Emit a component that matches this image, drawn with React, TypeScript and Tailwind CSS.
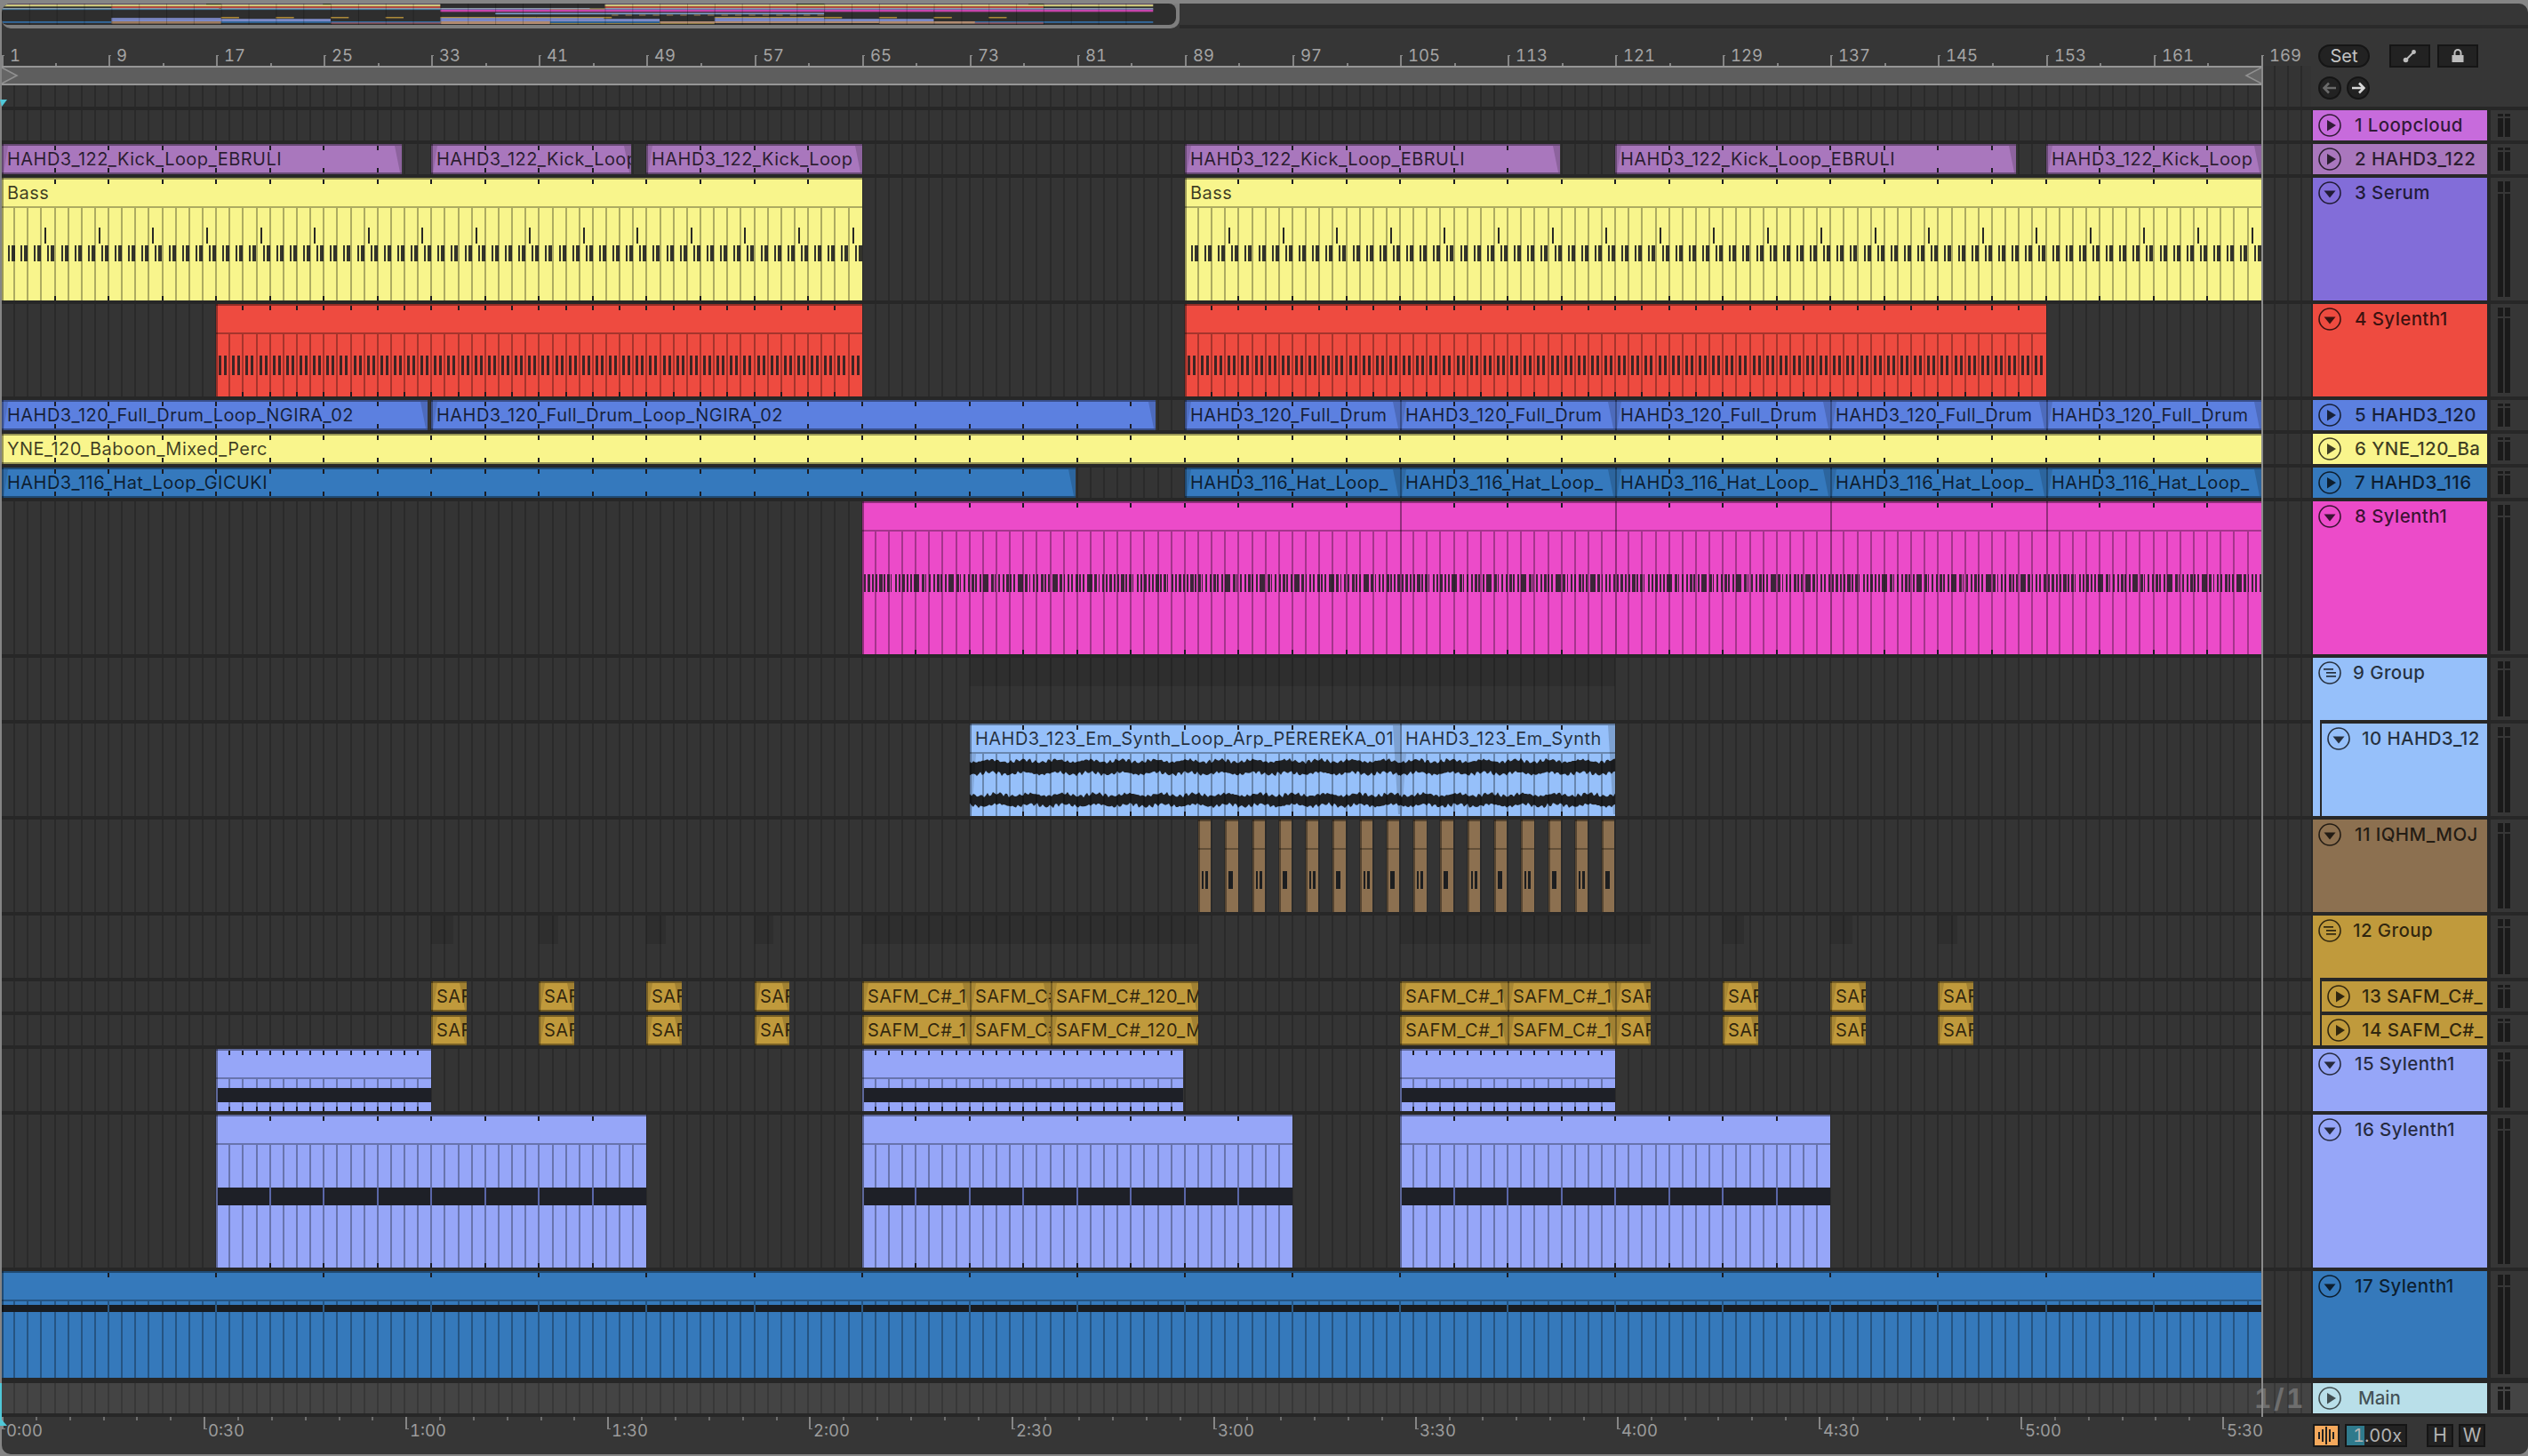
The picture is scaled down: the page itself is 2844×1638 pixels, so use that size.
import React from "react";

const X = (b: number) => (b <= 1 ? 0 : Math.round((b - 1) * 15.135) - 1);
const T = (s: number) => Math.round(s * 7.57);

type C = { a: number; b: number; t?: string };
type Track = {
  name: string;
  nx: number;
  h: number;
  color: string;
  clipColor?: string;
  icon: "play" | "down" | "group";
  group?: string;
  clips?: C[];
  step?: number;
  audio?: boolean;
  notes?: string;
  shade?: [number, number][];
};

const kick = "HAHD3_122_Kick_Loop_EBRULI";
const kick2 = "HAHD3_122_Kick_Loop";
const dr = "HAHD3_120_Full_Drum_Loop_NGIRA_02";
const dr2 = "HAHD3_120_Full_Drum";
const hat = "HAHD3_116_Hat_Loop_GICUKI";
const hat2 = "HAHD3_116_Hat_Loop_";
const syn = "HAHD3_123_Em_Synth_Loop_Arp_PEREREKA_01";

const safClips: C[] = [
  ...[33, 41, 49, 57].map((a) => ({ a, b: a + 2.62, t: "SAF" })),
  { a: 65, b: 73, t: "SAFM_C#_1" },
  { a: 73, b: 79, t: "SAFM_C#" },
  { a: 79, b: 90, t: "SAFM_C#_120_M" },
  { a: 105, b: 113, t: "SAFM_C#_1" },
  { a: 113, b: 121, t: "SAFM_C#_1" },
  { a: 121, b: 123.6, t: "SAF" },
  ...[129, 137, 145].map((a) => ({ a, b: a + 2.62, t: "SAF" })),
];

const BLUE = "#96c0fa";
const GOLD = "#c09a3c";

const tracks: Track[] = [
  { name: "1 Loopcloud", nx: 47, h: 34, color: "#c76bdc", icon: "play" },
  {
    name: "2 HAHD3_122", nx: 47, h: 34, color: "#a977bd", icon: "play", step: 4, audio: true,
    clips: [
      { a: 1, b: 30.83, t: kick }, { a: 33, b: 47.85, t: kick2 }, { a: 49, b: 65, t: kick2 },
      { a: 89, b: 116.9, t: kick }, { a: 121, b: 150.8, t: kick }, { a: 153, b: 169, t: kick2 },
    ],
  },
  {
    name: "3 Serum", nx: 47, h: 138, color: "#826dd9", clipColor: "#f8f58c", icon: "down", step: 4, notes: "bass",
    clips: [{ a: 1, b: 65, t: "Bass" }, { a: 89, b: 169, t: "Bass" }],
  },
  { name: "4 Sylenth1", nx: 47, h: 104, color: "#ee4b40", icon: "down", step: 2, notes: "red", clips: [{ a: 17, b: 65 }, { a: 89, b: 153 }] },
  {
    name: "5 HAHD3_120", nx: 47, h: 34, color: "#5c80e0", icon: "play", step: 4, audio: true,
    clips: [
      { a: 1, b: 32.7, t: dr }, { a: 33, b: 86.8, t: dr }, { a: 89, b: 105, t: dr2 }, { a: 105, b: 121, t: dr2 },
      { a: 121, b: 137, t: dr2 }, { a: 137, b: 153, t: dr2 }, { a: 153, b: 169, t: dr2 },
    ],
  },
  { name: "6 YNE_120_Ba", nx: 47, h: 34, color: "#f9f58c", icon: "play", step: 4, clips: [{ a: 1, b: 169, t: "YNE_120_Baboon_Mixed_Perc" }] },
  {
    name: "7 HAHD3_116", nx: 47, h: 34, color: "#3579bd", icon: "play", step: 4, audio: true,
    clips: [
      { a: 1, b: 80.9, t: hat }, { a: 89, b: 105, t: hat2 }, { a: 105, b: 121, t: hat2 },
      { a: 121, b: 137, t: hat2 }, { a: 137, b: 153, t: hat2 }, { a: 153, b: 169, t: hat2 },
    ],
  },
  {
    name: "8 Sylenth1", nx: 47, h: 172, color: "#ec4bc9", icon: "down", step: 4, notes: "pink",
    clips: [{ a: 65, b: 105 }, { a: 105, b: 121 }, { a: 121, b: 137 }, { a: 137, b: 153 }, { a: 153, b: 169 }],
  },
  { name: "9 Group", nx: 45, h: 70, color: BLUE, icon: "group", shade: [[73, 121]] },
  {
    name: "10 HAHD3_12", nx: 55, h: 104, color: BLUE, icon: "down", group: BLUE, step: 4, audio: true, notes: "wave",
    clips: [{ a: 73, b: 105, t: syn }, { a: 105, b: 121, t: "HAHD3_123_Em_Synth" }],
  },
  {
    name: "11 IQHM_MOJ", nx: 47, h: 104, color: "#8c7050", icon: "down", notes: "tiny",
    clips: Array.from({ length: 16 }, (_, i) => ({ a: 90 + i * 2, b: 90.95 + i * 2 })),
  },
  {
    name: "12 Group", nx: 45, h: 70, color: GOLD, icon: "group",
    shade: [[33, 34.6], [41, 42.4], [49, 50.4], [57, 58.4], [65, 90], [105, 123.6], [129, 130.6], [137, 138.6], [145, 146.4]],
  },
  { name: "13 SAFM_C#_", nx: 55, h: 34, color: GOLD, icon: "play", group: GOLD, audio: true, clips: safClips },
  { name: "14 SAFM_C#_", nx: 55, h: 34, color: GOLD, icon: "play", group: GOLD, audio: true, clips: safClips },
  { name: "15 Sylenth1", nx: 47, h: 70, color: "#96a6f8", icon: "down", step: 1, notes: "band15", clips: [{ a: 17, b: 33 }, { a: 65, b: 88.85 }, { a: 105, b: 121 }] },
  { name: "16 Sylenth1", nx: 47, h: 172, color: "#96a6f8", icon: "down", step: 4, notes: "band16", clips: [{ a: 17, b: 49 }, { a: 65, b: 97 }, { a: 105, b: 137 }] },
  { name: "17 Sylenth1", nx: 47, h: 120, color: "#3579bb", icon: "down", step: 8, notes: "band17", clips: [{ a: 1, b: 169 }] },
];

function Rc({ x, y, w, h, f, o }: { x: number; y: number; w: number; h: number; f: string; o?: number }) {
  return <rect x={x} y={y} width={w} height={h} fill={f} fillOpacity={o ?? 1} shapeRendering="crispEdges" />;
}

function noise(i: number, s: number) {
  return Math.sin(i * 0.9 + s) * 0.5 + Math.sin(i * 2.3 + s * 2) * 0.3 + Math.sin(i * 0.17 + s) * 0.6 + Math.sin(i * 5.1) * 0.3;
}

function wavePath(w: number, cy: number, half: number, s: number) {
  const top: string[] = [];
  const bot: string[] = [];
  for (let i = 0; i <= w; i += 2) {
    top.push(`${i},${(cy - half - noise(i, s) * 2.4).toFixed(1)}`);
    bot.unshift(`${i},${(cy + half + noise(i, s + 3) * 2.4).toFixed(1)}`);
  }
  return top.concat(bot).join(" ");
}

function Clip({ t, c, index }: { t: Track; c: C; index: number }) {
  const left = X(c.a);
  const w = X(c.b) - left;
  const h = t.h;
  const tall = h > 40;
  const rx = (b: number) => X(b) - left;
  const shapes: React.ReactNode[] = [];
  const push = (x: number, y: number, wd: number, ht: number, f: string, o?: number) =>
    shapes.push(<Rc key={shapes.length} x={x} y={y} w={wd} h={ht} f={f} o={o} />);
  const first = Math.ceil(c.a);
  if (tall && t.notes !== "tiny") {
    for (let b = first; b < c.b; b++) if (b > c.a) push(rx(b) - 1, 34, 2, h - 34, "#000", 0.3);
  }
  if (tall) push(0, 32, w, 2, "#000", 0.3);
  const ink = "#1d1e20";
  if (t.notes === "bass") {
    for (let b = first; b < c.b; b++) {
      push(rx(b) + 7, 76, 2, 18, ink, 0.9);
      push(rx(b) + 11, 76, 4, 18, ink, 0.9);
      if ((b - 4) % 4 === 0) push(rx(b) + 4, 56, 2, 18, ink, 0.95);
    }
  }
  if (t.notes === "red") {
    for (let b = first; b < c.b; b++) {
      push(rx(b) + 3, 58, 3, 22, ink, 0.85);
      push(rx(b) + 9, 58, 3, 22, ink, 0.85);
    }
  }
  if (t.notes === "pink") {
    const ws = [2, 3, 2, 2, 4, 2, 3, 1, 2];
    let k = 0;
    for (let x = 2; x < w; x += 4.32) {
      push(Math.round(x), 82, ws[k++ % ws.length], 20, ink, 0.85);
    }
  }
  if (t.notes === "tiny") {
    if (index % 2 === 0) {
      push(4, 58, 2, 20, ink);
      push(8, 58, 3, 20, ink);
    } else {
      push(4, 58, 5, 20, ink);
    }
  }
  if (t.notes === "band15") push(2, 44, w - 2, 16, "#1e2027");
  if (t.notes === "band16") {
    push(2, 82, w - 2, 20, "#1e2027");
    for (let b = first; b < c.b; b++) if ((b - 1) % 4 === 0 && b > c.a) push(rx(b) - 1, 82, 2, 20, "#5a66a8");
  }
  if (t.notes === "band17") {
    push(0, 38, w, 8, "#181c21");
    for (let b = first; b < c.b; b++) if ((b - 1) % 8 === 0 && b > c.a) push(rx(b) - 1, 38, 2, 8, "#2a5a88");
  }
  const step = t.step;
  if (step) {
    for (let b = first; b < c.b; b++) {
      if ((b - 1) % step === 0 && b > c.a) {
        push(rx(b) - 1, 2, 2, 5, "#1c1c22");
        if (t.notes !== "band17") push(rx(b) - 1, h - (tall ? 5 : 7), 2, 5, "#1c1c22");
      }
    }
  }
  push(0, 0, w, 2, "#000", 0.38);
  push(0, 0, 2, h, "#000", 0.38);
  if (!tall) push(0, h - 2, w, 2, "#000", 0.38);
  return (
    <div className="absolute top-0 bottom-0 overflow-hidden" style={{ left, width: w, background: t.clipColor ?? t.color }}>
      <svg className="absolute left-0 top-0" width={w} height={h}>
        {t.notes === "wave" && (
          <>
            <polygon points={wavePath(w, 49, 7, c.a)} fill="#1e2023" />
            <polygon points={wavePath(w, 86, 6, c.a + 5)} fill="#1e2023" />
          </>
        )}
        {shapes}
        {t.audio && (
          <>
            <polygon points={`${w - 8},2 ${w},2 ${w},${h - 2} ${w - 2},${h - 2}`} fill="#000" fillOpacity={0.16} />
            <polygon points={`2,${tall ? 34 : 2} 7,${tall ? 34 : 2} 2,${h}`} fill="#000" fillOpacity={0.12} />
          </>
        )}
      </svg>
      {c.t && (
        <span
          className="absolute left-[6px] top-[2px] h-[30px] leading-[30px] whitespace-nowrap overflow-hidden text-[20px] tracking-[0.45px] text-black/75"
          style={{ width: w - 6 }}
        >
          {c.t}
        </span>
      )}
    </div>
  );
}

function Icon({ kind, className }: { kind: "play" | "down" | "group"; className?: string }) {
  return (
    <svg width="26" height="26" viewBox="0 0 26 26" className={className}>
      <circle cx="13" cy="13" r="12" fill="none" stroke="currentColor" strokeWidth="1.6" />
      {kind === "play" && <polygon points="10,7 20,13 10,19.5" fill="currentColor" />}
      {kind === "down" && <polygon points="6.5,10.5 19.5,10.5 13,18.5" fill="currentColor" />}
      {kind === "group" && (
        <>
          <rect x="6" y="8" width="11" height="1.7" fill="currentColor" />
          <rect x="9" y="12" width="11" height="1.7" fill="currentColor" />
          <rect x="9" y="16" width="11" height="1.7" fill="currentColor" />
        </>
      )}
    </svg>
  );
}

function Meter({ h, main }: { h: number; main?: boolean }) {
  const cap = h < 40 ? 3 : h < 80 ? 8 : h < 110 ? 10 : 12;
  return (
    <div className={`flex-1 flex gap-[2px] pl-[8px] py-[4px] ${main ? "bg-[#444444]" : "bg-[#363636]"}`}>
      {[0, 1].map((i) => (
        <div key={i} className="w-[6px] flex flex-col gap-[2px]">
          <div className="bg-[#1a1a1a]" style={{ height: cap }} />
          <div className="flex-1 bg-[#1a1a1a]" />
        </div>
      ))}
    </div>
  );
}

function Sep({ h = 4, strip }: { h?: number; strip?: string }) {
  return (
    <div className="flex bg-[#272727] relative" style={{ height: h }}>
      <div className="w-[2600px]" />
      {strip && <div className="w-[8px]" style={{ background: strip }} />}
    </div>
  );
}

function Row({ t }: { t: Track }) {
  return (
    <div className="flex relative" style={{ height: t.h }}>
      <div className="w-[2598px] relative">
        {t.shade?.map(([a, b], i) => (
          <div key={i} className="absolute top-0 h-[32px] bg-black/10" style={{ left: X(a), width: X(b) - X(a) }} />
        ))}
        {t.clips?.map((c, i) => <Clip key={i} t={t} c={c} index={i} />)}
      </div>
      <div className="w-[2px] bg-[#272727]" />
      <div className="w-[196px] flex overflow-hidden" style={{ background: t.color }}>
        {t.group && <div className="w-[8px] shrink-0" />}
        {t.group && <div className="w-[2px] shrink-0 bg-[#272727]" />}
        <div className="relative flex-1 text-black/75">
          <Icon kind={t.icon} className="absolute top-[4px] left-[6px]" />
          <div
            className="absolute top-0 h-[34px] leading-[34px] whitespace-nowrap text-[20.5px] tracking-[0.4px] font-medium"
            style={{ left: t.group ? t.nx - 10 : t.nx }}
          >
            {t.name}
          </div>
        </div>
      </div>
      <div className="w-[4px] bg-[#272727]" />
      <Meter h={t.h} />
    </div>
  );
}

function Grid({ line, bg }: { line: string; bg: string }) {
  const n = 173;
  return (
    <svg className="absolute inset-0 w-full h-full" preserveAspectRatio="none">
      <rect width="100%" height="100%" fill={bg} />
      {Array.from({ length: n }, (_, i) => (
        <rect key={i} x={X(i + 2) - 1} y={0} width={2} height="100%" fill={line} shapeRendering="crispEdges" />
      ))}
    </svg>
  );
}

function Overview() {
  const ox = (b: number) => (b - 1) * 7.71;
  const oy = (y: number) => 1 + (y - 190) * 0.0153;
  const rects: React.ReactNode[] = [];
  let y = 124;
  tracks.forEach((t, i) => {
    (t.clips ?? []).forEach((c, j) => {
      const top = Math.max(oy(y), 0.5);
      const ht = Math.max(oy(y + t.h) - top, 1);
      rects.push(
        <rect key={`${i}-${j}`} x={ox(c.a)} y={top} width={ox(c.b) - ox(c.a)} height={ht} fill={t.clipColor ?? t.color} fillOpacity={0.8} />
      );
    });
    y += t.h + 4;
  });
  const extra: [number, number, number, number, string][] = [
    [17, 33, 20, 2.6, "#9c7b60"],
    [65, 81, 20, 3, "#b08a70"],
    [81, 105, 22, 0.8, "#a8904a"],
    [129, 143, 20, 2.6, "#b08a70"],
    [49, 65, 21.5, 1, "#c0606a"],
    [143, 153, 21.5, 1, "#c0606a"],
    [97, 129, 20, 2, "#b08a70"],
  ];
  return (
    <svg width="1321" height="24" className="block">
      {rects}
      {extra.map((e, i) => (
        <rect key={i} x={ox(e[0])} y={e[2]} width={ox(e[1]) - ox(e[0])} height={e[3]} fill={e[4]} />
      ))}
      {Array.from({ length: 42 }, (_, i) => (
        <rect key={i} x={ox(1 + i * 4)} y={0} width={1} height={24} fill="#000" fillOpacity={0.22} />
      ))}
    </svg>
  );
}

const bars = Array.from({ length: 22 }, (_, i) => 1 + i * 8);
const times = [30, 60, 90, 120, 150, 180, 210, 240, 270, 300, 330];
const fmt = (s: number) => `${Math.floor(s / 60)}:${String(s % 60).padStart(2, "0")}`;

export default function App() {
  return (
    <div className="relative w-[2844px] h-[1638px] bg-[#858585] pt-[4px] pb-[2px] pl-[2px] overflow-hidden [font-family:Inter,sans-serif]">
      <div className="relative w-[2842px] h-[1632px] flex flex-col bg-[#363636] rounded-[10px] overflow-hidden">
        {/* overview */}
        <div className="flex h-[28px] shrink-0">
          <div className="w-[1325px] bg-[#7e7e7e] pr-[4px] pb-[4px] rounded-b-[10px]">
            <div className="h-[24px] bg-[#2e2e2e] rounded-r-[8px] rounded-bl-[6px] overflow-hidden">
              <Overview />
            </div>
          </div>
          <div className="flex-1 flex flex-col justify-end">
            <div className="h-[4px] bg-[#2a2a2a]" />
          </div>
        </div>

        <div className="relative flex-1 flex flex-col">
          {/* grid behind arrangement */}
          <div className="absolute left-0 top-[42px] w-[2598px] h-[1516px]">
            <Grid line="#2a2a2a" bg="#343434" />
          </div>

          {/* ruler + loop + first empty row */}
          <div className="flex h-[88px] relative shrink-0">
            <div className="w-[2598px] relative">
              <div className="h-[42px] relative bg-[#363636] text-[#a4a4a4] text-[18.5px] tabular-nums">
                {bars.map((b) => (
                  <div key={b} className="absolute top-[30px] h-[12px] w-[3px] border-l-2 border-t-[1px] border-[#858585]" style={{ left: X(b) }} />
                ))}
                {bars.slice(0, 21).map((b) => (
                  <div key={`m${b}`} className="absolute bottom-0 h-[3px] w-[2px] bg-[#858585]" style={{ left: X(b + 4) }} />
                ))}
                {bars.map((b) => (
                  <span key={`l${b}`} className="absolute top-[18px] leading-[24px]" style={{ left: X(b) + 9 }}>
                    {b}
                  </span>
                ))}
              </div>
              <div className="absolute left-0 top-[42px] w-[2542px] h-[22px] bg-[#5e5e5e] border-y-2 border-[#969696]">
                <svg width="20" height="18" className="absolute left-0 top-0">
                  <polyline points="0,0 17,9 0,18" fill="#666" stroke="#909090" strokeWidth="1.6" />
                </svg>
                <svg width="20" height="18" className="absolute right-0 top-0">
                  <polyline points="20,0 3,9 20,18" fill="#666" stroke="#909090" strokeWidth="1.6" />
                </svg>
              </div>
            </div>
            <div className="w-[2px]" />
            <div className="w-[242px] pl-[6px] pt-[18px] flex flex-col gap-[10px] bg-[#363636]">
              <div className="flex">
                <div className="w-[58px] h-[26px] rounded-full bg-[#222222] border-2 border-[#151515] text-[#c4c4c4] text-[20px] leading-[22px] text-center">
                  Set
                </div>
                <div className="ml-[22px] w-[46px] h-[26px] bg-[#222222] border-2 border-[#151515] flex items-center justify-center">
                  <svg width="16" height="16" viewBox="0 0 16 16">
                    <line x1="4" y1="12" x2="12" y2="4" stroke="#bdbdbd" strokeWidth="2" />
                    <circle cx="3.5" cy="12.5" r="2.8" fill="#bdbdbd" />
                    <circle cx="12.5" cy="3.5" r="2.4" fill="#bdbdbd" />
                  </svg>
                </div>
                <div className="ml-[8px] w-[46px] h-[26px] bg-[#222222] border-2 border-[#151515] flex items-center justify-center">
                  <svg width="16" height="16" viewBox="0 0 16 16">
                    <rect x="1.5" y="7" width="13" height="8" fill="#bdbdbd" />
                    <path d="M4.5 7V4.5a3.5 3.5 0 0 1 7 0V7" fill="none" stroke="#bdbdbd" strokeWidth="2" />
                  </svg>
                </div>
              </div>
              <div className="flex gap-[6px]">
                <div className="w-[26px] h-[26px] rounded-full bg-[#222222] border-2 border-[#151515] flex items-center justify-center">
                  <svg width="16" height="14" viewBox="0 0 16 14">
                    <path d="M1 7h14M7 1.5L1.5 7 7 12.5" fill="none" stroke="#6a6a6a" strokeWidth="2.6" />
                  </svg>
                </div>
                <div className="w-[26px] h-[26px] rounded-full bg-[#222222] border-2 border-[#151515] flex items-center justify-center">
                  <svg width="16" height="14" viewBox="0 0 16 14">
                    <path d="M1 7h14M9 1.5L14.5 7 9 12.5" fill="none" stroke="#d8d8d8" strokeWidth="2.6" />
                  </svg>
                </div>
              </div>
            </div>
          </div>

          {/* tracks */}
          <div className="relative flex flex-col">
            {tracks.map((t, i) => (
              <React.Fragment key={i}>
                <Sep strip={t.group} />
                <Row t={t} />
              </React.Fragment>
            ))}
            <Sep h={6} />
            <div className="flex relative h-[34px]">
              <div className="w-[2598px] relative">
                <Grid line="#383838" bg="#444444" />
                <span className="absolute right-[6px] top-0 leading-[34px] text-[30px] font-bold tabular-nums tracking-[2.5px] text-[#6e6e6e]">1/1</span>
              </div>
              <div className="w-[2px] bg-[#272727]" />
              <div className="w-[196px] relative bg-[#b9dfe9] text-black/65">
                <Icon kind="play" className="absolute left-[6px] top-[4px]" />
                <div className="absolute left-[51px] top-0 leading-[34px] text-[20.5px] font-medium">Main</div>
              </div>
              <div className="w-[4px] bg-[#272727]" />
              <Meter h={34} main />
            </div>
            <Sep />
          </div>

          {/* time ruler */}
          <div className="flex flex-1">
            <div className="w-[2598px] relative text-[#9c9c9c] text-[18.5px] tabular-nums">
              {Array.from({ length: 67 }, (_, i) => i * 5).map((s) =>
                s % 30 === 0 ? (
                  <div key={s} className="absolute top-0 h-[14px] w-[4px] border-l-2 border-b-[1.5px] border-[#858585]" style={{ left: T(s) }} />
                ) : (
                  <div key={s} className="absolute top-0 h-[4px] w-[2px] bg-[#6e6e6e]" style={{ left: T(s) }} />
                )
              )}
              <span className="absolute left-[5px] top-[3px] leading-[24px]">0:00</span>
              {times.map((s) => (
                <span key={s} className="absolute top-[3px] leading-[24px]" style={{ left: T(s) + 5 }}>
                  {fmt(s)}
                </span>
              ))}
            </div>
            <div className="w-[2px]" />
            <div className="w-[242px] pt-[8px] flex items-start bg-[#363636]">
              <div className="w-[30px] h-[26px] bg-[#f5a95c] border-2 border-[#1a1a1a] flex items-center justify-center">
                <svg width="22" height="20" viewBox="0 0 22 20">
                  {[[3, 6, 8], [7, 3, 14], [11, 0, 20], [15, 3, 14], [19, 6, 8]].map(([x, y, h], i) => (
                    <rect key={i} x={x - 1} y={y} width={2} height={h} fill="#222" />
                  ))}
                </svg>
              </div>
              <div className="ml-[6px] relative w-[70px] h-[26px] bg-[#222222] border-2 border-[#151515] text-[#b4b4b4] text-[20px] leading-[22px] pl-[7px] tabular-nums">
                <div className="absolute left-[0px] top-0 bottom-0 w-[20px] bg-[#2f7a8c]" />
                <span className="relative">1.00x</span>
              </div>
              <div className="ml-[22px] w-[30px] h-[26px] bg-[#222222] border-2 border-[#151515] text-[#b4b4b4] text-[21px] leading-[22px] text-center">H</div>
              <div className="ml-[6px] w-[30px] h-[26px] bg-[#222222] border-2 border-[#151515] text-[#b4b4b4] text-[21px] leading-[22px] text-center">W</div>
            </div>
          </div>
        </div>
      </div>

      {/* overlays: end marker and playhead */}
      <div className="absolute left-[2544px] top-[62px] w-[2px] h-[1532px] bg-[#8c8c8c]" />
      <svg width="10" height="10" className="absolute left-0 top-[112px]">
        <polygon points="0,0 8,0 2,8" fill="#4fc8d8" />
      </svg>
      <div className="absolute left-0 top-[1556px] w-[2px] h-[44px] bg-[#4fc8d8]" />
      <svg width="10" height="10" className="absolute left-0 top-[1595px]">
        <polygon points="0,0 8,9 0,9" fill="#4fc8d8" />
      </svg>
    </div>
  );
}
